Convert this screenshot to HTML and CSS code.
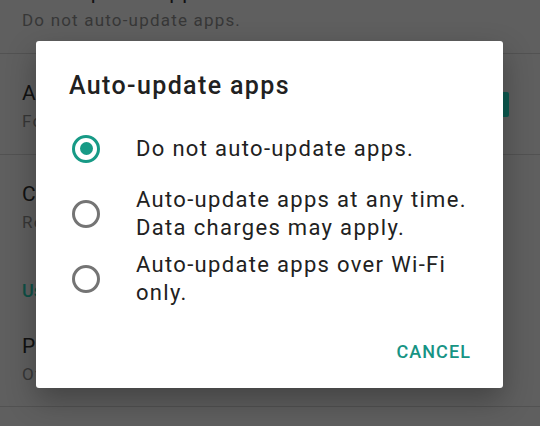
FILE: index.html
```html
<!DOCTYPE html>
<html>
<head>
<meta charset="utf-8">
<link rel="stylesheet" href="styles.css">
</head>
<body>
<div class="screen">
  <div class="list">
    <div class="item">
      <div class="title">Auto-update apps</div>
      <div class="sub">Do not auto-update apps.</div>
    </div>
    <div class="item check">
      <div class="texts">
        <div class="title">Add icon to Home screen</div>
        <div class="sub">For new apps</div>
      </div>
      <div class="box"></div>
    </div>
    <div class="item plain">
      <div class="title">Clear local search history</div>
      <div class="sub">Remove all searches you have performed</div>
    </div>
    <div class="section">User controls</div>
    <div class="item last">
      <div class="title">Parental controls</div>
      <div class="sub">Off</div>
    </div>
  </div>

  <div class="dialog">
    <div class="dtitle">Auto-update apps</div>
    <div class="options">
      <div class="opt">
        <span class="radio on"><span class="dot"></span></span>
        <span class="label">Do not auto-update apps.</span>
      </div>
      <div class="opt">
        <span class="radio"></span>
        <span class="label">Auto-update apps at any time.<br>Data charges may apply.</span>
      </div>
      <div class="opt">
        <span class="radio"></span>
        <span class="label">Auto-update apps over Wi-Fi<br>only.</span>
      </div>
    </div>
    <div class="actions">
      <span class="btn">CANCEL</span>
    </div>
  </div>
</div>
</body>
</html>
```
FILE: styles.css
```css
html, body {
  margin: 0;
  padding: 0;
}
body {
  width: 540px;
  height: 426px;
  overflow: hidden;
  background: #5f5f5f;
  font-family: Roboto, "Liberation Sans", sans-serif;
}
.screen {
  position: relative;
  width: 540px;
  height: 426px;
  overflow: hidden;
}
.list {
  display: flex;
  flex-direction: column;
  margin-top: -47px;
}
.item {
  box-sizing: border-box;
  height: 101px;
  padding: 25px 22px 0;
  border-bottom: 1px solid #525252;
}
.item.check {
  display: flex;
  align-items: flex-start;
}
.item.check .texts {
  flex: 1;
}
.box {
  width: 24px;
  height: 25px;
  border-radius: 2px;
  background: #0c5a50;
  margin-top: 13px;
  margin-right: 9px;
}
.item.plain {
  border-bottom: none;
}
.item.last {
  height: 100px;
}
.title {
  font-size: 21px;
  color: #121212;
  line-height: 28px;
  letter-spacing: 0.06em;
  white-space: nowrap;
}
.sub {
  margin-top: 2px;
  font-size: 17px;
  color: #373737;
  line-height: 24px;
  letter-spacing: 0.07em;
  white-space: nowrap;
}
.section {
  box-sizing: border-box;
  height: 51px;
  padding: 23px 22px 0;
  font-size: 18px;
  font-weight: 500;
  line-height: 24px;
  color: #0e5046;
}

.dialog {
  position: absolute;
  left: 36px;
  top: 41px;
  width: 467px;
  height: 347px;
  background: #ffffff;
  border-radius: 3px;
  box-shadow: 0 12px 30px rgba(0, 0, 0, 0.3);
  box-sizing: border-box;
  padding-top: 29px;
  display: flex;
  flex-direction: column;
}
.dtitle {
  padding-left: 33px;
  font-size: 25px;
  font-weight: 500;
  color: #212121;
  line-height: 32px;
  letter-spacing: 0.055em;
}
.options {
  margin-top: 14px;
  display: flex;
  flex-direction: column;
}
.opt {
  display: flex;
  align-items: center;
  height: 65px;
}
.radio {
  box-sizing: border-box;
  width: 28px;
  height: 28px;
  border: 3px solid #747474;
  border-radius: 50%;
  margin-left: 36px;
  margin-right: 36px;
  display: flex;
  align-items: center;
  justify-content: center;
  flex: none;
}
.radio.on {
  border-color: #179a86;
}
.dot {
  width: 13px;
  height: 13px;
  border-radius: 50%;
  background: #179a86;
}
.label {
  font-size: 22px;
  color: #212121;
  line-height: 28px;
  letter-spacing: 0.06em;
}
.actions {
  margin-top: auto;
  margin-bottom: 24px;
  display: flex;
  justify-content: flex-end;
  padding-right: 32px;
}
.btn {
  font-size: 18px;
  font-weight: 500;
  color: #179484;
  line-height: 24px;
  letter-spacing: 0.06em;
}
```
